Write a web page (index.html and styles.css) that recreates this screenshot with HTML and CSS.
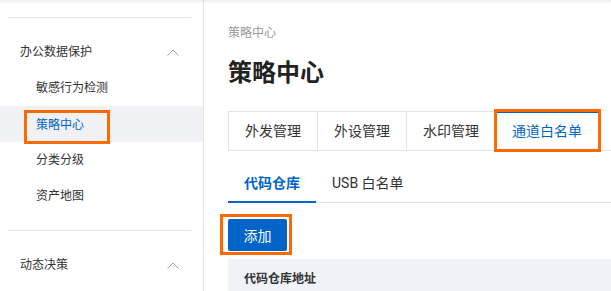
FILE: index.html
```html
<!doctype html>
<html>
  <head>
    <meta charset="UTF-8" />
    <link rel="stylesheet" href="styles.css">
  </head>
  <body>
    <div class="layout">
      <aside class="sidebar">
        <div class="divider"></div>
        <div class="menu-group">
          <div class="group-title">
            <span>办公数据保护</span>
            <svg class="chevron" width="12" height="12" viewBox="0 0 12 12"><polyline points="0.5,9.5 6,4 11.5,9.5" /></svg>
          </div>
          <div class="menu-item">敏感行为检测</div>
          <div class="menu-item active"><span class="mark menu-mark">策略中心</span></div>
          <div class="menu-item">分类分级</div>
          <div class="menu-item">资产地图</div>
        </div>
        <div class="divider"></div>
        <div class="menu-group">
          <div class="group-title">
            <span>动态决策</span>
            <svg class="chevron" width="12" height="12" viewBox="0 0 12 12"><polyline points="0.5,9.5 6,4 11.5,9.5" /></svg>
          </div>
        </div>
      </aside>
      <main class="content">
        <div class="breadcrumb">策略中心</div>
        <h1 class="title">策略中心</h1>
        <div class="tabs">
          <div class="tab">外发管理</div>
          <div class="tab">外设管理</div>
          <div class="tab">水印管理</div>
          <div class="tab active">通道白名单</div>
        </div>
        <div class="subtabs">
          <div class="subtab active">代码仓库</div>
          <div class="subtab">USB 白名单</div>
        </div>
        <div class="toolbar">
          <span class="mark button-mark"><button class="btn-primary">添加</button></span>
        </div>
        <div class="table-head">代码仓库地址</div>
      </main>
    </div>
  </body>
</html>
```

FILE: styles.css
```css
html,
body {
  height: 100%;
}
body {
  background: white;
  color: #333;
  font-family: Roboto, "Noto Sans CJK SC", sans-serif;
  margin: 0;
  overflow: hidden;
}
body::before {
  content: '';
  position: absolute;
  top: 0;
  left: 0;
  right: 0;
  height: 4px;
  background: linear-gradient(rgba(0, 0, 0, 0.07), rgba(0, 0, 0, 0));
}
.layout {
  display: flex;
  height: 100%;
}
.sidebar {
  width: 203px;
  flex-shrink: 0;
  border-right: 1px solid #e6e6e6;
  padding-top: 17px;
}
.divider {
  height: 1px;
  background: #e3e3e3;
  margin: 0 12px 0 8px;
}
.menu-group {
  padding: 16px 0;
}
.group-title,
.menu-item {
  display: flex;
  align-items: center;
  height: 36px;
  font-size: 12px;
  line-height: 20px;
}
.group-title {
  justify-content: space-between;
  padding: 0 24px 0 20px;
}
.chevron polyline {
  fill: none;
  stroke: #a3a3a3;
  stroke-width: 1;
}
.menu-item {
  padding-left: 36px;
}
.menu-item.active {
  align-items: flex-start;
  background: #eff1f5;
  color: #0064c8;
  padding-left: 24px;
}
.mark {
  border: 3px solid #ff6a00;
  display: inline-block;
}
.menu-mark {
  line-height: 24px;
  margin-top: 4px;
  padding: 0 23px 4px 9px;
}
.content {
  flex-grow: 1;
  padding: 23px 0 0 24px;
  overflow: hidden;
}
.breadcrumb {
  color: #999;
  font-size: 12px;
  line-height: 20px;
}
.title {
  font-size: 24px;
  font-weight: bold;
  line-height: 32px;
  margin: 14px 0 0;
  color: #222;
}
.tabs {
  display: flex;
  border-bottom: 1px solid #e3e3e3;
  margin-top: 22px;
}
.tab {
  border-top: 1px solid #e3e3e3;
  border-right: 1px solid #e3e3e3;
  font-size: 14px;
  height: 38px;
  line-height: 38px;
  padding: 0 16px;
}
.tab:first-child {
  border-left: 1px solid #e3e3e3;
}
.tab.active {
  border-top: 2px solid #0064c8;
  color: #0064c8;
  height: 37px;
  line-height: 37px;
  outline: 3px solid #ff6a00;
  outline-offset: -1px;
}
.subtabs {
  display: flex;
  border-bottom: 1px solid #e3e3e3;
  margin-top: 17px;
}
.subtab {
  border-bottom: 2px solid transparent;
  font-size: 14px;
  line-height: 30px;
  margin-bottom: -1px;
  padding: 0 16px 3px;
}
.subtab.active {
  border-bottom-color: #0064c8;
  color: #0064c8;
  font-weight: bold;
}
.toolbar {
  display: flex;
  margin-top: 11px;
}
.button-mark {
  margin-left: -8px;
  padding: 2px 2px 1px 5px;
}
.btn-primary {
  background: #0064c8;
  border: none;
  border-radius: 2px;
  color: white;
  display: block;
  font-family: inherit;
  font-size: 14px;
  height: 32px;
  padding: 0 15px;
  width: 59px;
}
.table-head {
  background: #eff2f6;
  font-size: 12px;
  font-weight: bold;
  height: 40px;
  line-height: 40px;
  margin-top: 4px;
  padding-left: 16px;
}
```
